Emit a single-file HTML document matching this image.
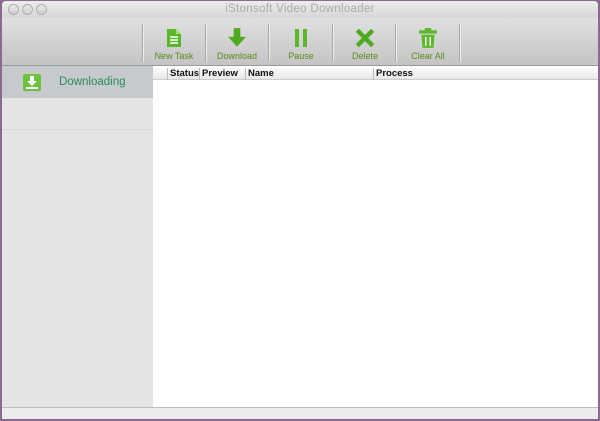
<!DOCTYPE html>
<html><head><style>
*{margin:0;padding:0;box-sizing:border-box}
body{width:600px;height:421px;background:#8a6a8e;font-family:"Liberation Sans",sans-serif;overflow:hidden;position:relative}
.win{position:absolute;left:2px;top:1px;width:596px;height:418px;background:#e4e4e4;border-radius:4px 4px 0 0;overflow:hidden}
.title{position:absolute;left:0;top:0;width:100%;height:17px;background:linear-gradient(#ececec,#d6d6d6);text-align:center;font-size:11.5px;color:#aaa;line-height:17px;letter-spacing:.3px}
.dot{position:absolute;top:3px;width:11px;height:11px;border-radius:50%;border:1px solid #b0b0b0;background:linear-gradient(#e8e8e8,#cfcfcf)}
.tool{position:absolute;left:0;top:17px;width:100%;height:48px;background:linear-gradient(#e0e0e0,#c4c4c4);border-bottom:1px solid #9a9a9a}
.sep{position:absolute;top:6px;width:1px;height:38px;background:#a8a8a8;box-shadow:1px 0 0 #eee}
.btn{position:absolute;top:9px;width:60px;text-align:center;font-size:9px;color:#5b8a1c}
.btn svg{display:block;margin:0 auto 2px}
.side{position:absolute;left:0;top:65px;width:151px;height:341px;background:#e4e4e4}
.sel{position:absolute;left:0;top:0;width:151px;height:32px;background:#c6cacf}
.sel span{position:absolute;left:57px;top:10px;font-size:11.5px;color:#2a8a55}
.main{position:absolute;left:151px;top:65px;width:445px;height:341px;background:#fff}
.hdr{position:absolute;left:0;top:2px;width:100%;height:12px;background:linear-gradient(#fafafa,#e8e8e8);border-bottom:1px solid #ccc;font-size:9.5px;font-weight:bold;color:#111;line-height:12px}
.hdr span{position:absolute;top:0;border-left:1px solid #bbb;padding-left:2px}
.foot{position:absolute;left:0;top:406px;width:100%;height:12px;background:#ececec;border-top:1px solid #bdbdbd}
</style></head><body>
<div class="win">
<div class="title">iStonsoft Video Downloader
<div class="dot" style="left:6px"></div><div class="dot" style="left:20px"></div><div class="dot" style="left:34px"></div></div>
<div class="tool">
<div class="sep" style="left:140px"></div><div class="sep" style="left:203px"></div><div class="sep" style="left:266px"></div><div class="sep" style="left:330px"></div><div class="sep" style="left:393px"></div><div class="sep" style="left:457px"></div>
<div class="btn" style="left:142px"><svg width="16" height="22" viewBox="0 0 16 20"><path d="M1 1h9l5 5v13H1z" fill="#5cb82a"/><path d="M10 1v5h5" fill="#9fdc6e"/><path d="M4 9h8M4 12h8M4 15h8" stroke="#fff" stroke-width="1.4"/></svg>New Task</div>
<div class="btn" style="left:205px"><svg width="20" height="22" viewBox="0 0 18 20"><path d="M6 1h6v8h5l-8 9-8-9h5z" fill="#4eaa1e"/></svg>Download</div>
<div class="btn" style="left:269px"><svg width="18" height="22" viewBox="0 0 18 20"><rect x="3" y="1" width="4" height="18" fill="#5cb82a"/><rect x="11" y="1" width="4" height="18" fill="#5cb82a"/></svg>Pause</div>
<div class="btn" style="left:333px"><svg width="22" height="22" viewBox="0 0 20 20"><path d="M3 3l14 14M17 3L3 17" stroke="#4eaa1e" stroke-width="4"/></svg>Delete</div>
<div class="btn" style="left:396px"><svg width="20" height="22" viewBox="0 0 18 20"><rect x="1" y="3" width="16" height="3" fill="#5cb82a"/><rect x="6" y="1" width="6" height="3" fill="#5cb82a"/><path d="M3 7h12l-1 12H4z" fill="#5cb82a"/><path d="M7 9v8M11 9v8" stroke="#fff" stroke-width="1.3"/></svg>Clear All</div>
</div>
<div class="side"><div class="sel"><svg style="position:absolute;left:21px;top:8px" width="18" height="17" viewBox="0 0 18 17"><rect width="18" height="17" rx="2" fill="#6cc23a"/><path d="M7 2h4v5h3l-5 5-5-5h3z" fill="#fff"/><rect x="3" y="13" width="12" height="2" fill="#fff"/></svg><span>Downloading</span></div>
<div style="position:absolute;left:0;top:63px;width:151px;height:1px;background:#d8d8d8"></div></div>
<div class="main"><div class="hdr"><span style="left:14px">Status</span><span style="left:46px">Preview</span><span style="left:92px">Name</span><span style="left:220px">Process</span></div></div>
<div class="foot"></div>
</div>
</body></html>
